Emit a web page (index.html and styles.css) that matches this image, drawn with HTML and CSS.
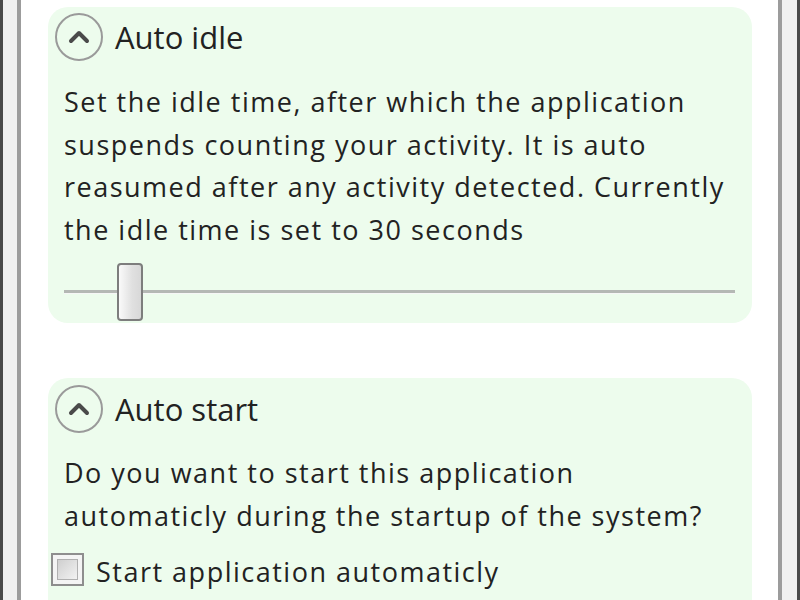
FILE: index.html
```html
<!DOCTYPE html>
<html>
<head>
<meta charset="utf-8">
<link rel="stylesheet" href="styles.css">
</head>
<body>
<div class="frame">
  <div class="edge edge-left"></div>
  <div class="content">
    <section class="panel panel-idle">
      <div class="panel-head">
        <span class="toggle">
          <svg width="48" height="48" viewBox="0 0 48 48"><circle cx="24" cy="24" r="23" fill="none" stroke="#9a9a9a" stroke-width="2"/><path d="M16 28 L24 20 L32 28" fill="none" stroke="#4a4a4a" stroke-width="4" stroke-linecap="round" stroke-linejoin="round"/></svg>
        </span>
        <span class="title">Auto idle</span>
      </div>
      <p class="desc">Set the idle time, after which the application<br>suspends counting your activity. It is auto<br>reasumed after any activity detected. Currently<br>the idle time is set to 30 seconds</p>
      <div class="slider">
        <div class="track"></div>
        <div class="thumb"></div>
      </div>
    </section>
    <section class="panel panel-start">
      <div class="panel-head">
        <span class="toggle">
          <svg width="48" height="48" viewBox="0 0 48 48"><circle cx="24" cy="24" r="23" fill="none" stroke="#9a9a9a" stroke-width="2"/><path d="M16 28 L24 20 L32 28" fill="none" stroke="#4a4a4a" stroke-width="4" stroke-linecap="round" stroke-linejoin="round"/></svg>
        </span>
        <span class="title">Auto start</span>
      </div>
      <p class="desc">Do you want to start this application<br>automaticly during the startup of the system?</p>
      <label class="check">
        <span class="box"><span class="box-inner"></span></span>
        <span class="check-label">Start application automaticly</span>
      </label>
    </section>
  </div>
  <div class="edge edge-right"></div>
</div>
</body>
</html>
```
FILE: styles.css
```css
html, body {
  margin: 0;
  padding: 0;
  background: #ffffff;
  height: 100%;
  overflow: hidden;
}
body {
  font-family: "Open Sans", "Noto Sans", sans-serif;
  color: #222222;
}
.frame {
  display: flex;
  height: 600px;
}
.edge {
  width: 14px;
  background: #f0f0f0;
  flex: none;
}
.edge-left {
  border-left: 3px solid #4a4a4a;
  border-right: 4px solid #9c9c9c;
}
.edge-right {
  width: 15px;
  border-left: 4px solid #9c9c9c;
  border-right: 3px solid #4a4a4a;
}
.content {
  flex: 1;
  padding: 7px 26px 0 27px;
  display: flex;
  flex-direction: column;
  gap: 55px;
  overflow: hidden;
}
.panel {
  background: #edfced;
  border-radius: 20px;
  flex: none;
}
.panel-idle {
  padding: 6px 16px 2px 7px;
}
.panel-start {
  padding: 7px 16px 40px 3px;
}
.panel-head {
  display: flex;
  align-items: center;
  gap: 12px;
  height: 48px;
}
.panel-start .panel-head {
  padding-left: 4px;
}
.toggle {
  width: 48px;
  height: 48px;
  display: block;
}
.toggle svg {
  display: block;
}
.title {
  font-size: 31px;
  line-height: 48px;
}
.desc {
  margin: 20px 0 0 9px;
  font-size: 27px;
  letter-spacing: 1.5px;
  line-height: 42.5px;
}
.panel-start .desc {
  margin: 19px 0 0 13px;
}
.slider {
  position: relative;
  height: 58px;
  margin: 12px 0 0 9px;
  display: flex;
  align-items: center;
}
.track {
  flex: 1;
  height: 3px;
  background: #b4b8b4;
  border-bottom: 1px solid #f6f6f6;
  margin-right: 1px;
}
.thumb {
  position: absolute;
  left: 53px;
  top: 0;
  width: 22px;
  height: 54px;
  border: 2px solid #7d7d7d;
  border-radius: 4px;
  background: linear-gradient(to right, #fafafa, #e0e0e0 60%, #d8d8d8);
}
.check {
  display: flex;
  align-items: center;
  gap: 12px;
  margin-top: 15px;
}
.box {
  width: 29px;
  height: 29px;
  border: 2px solid #8e8e8e;
  background: #f4f4f4;
  display: flex;
  align-items: center;
  justify-content: center;
  flex: none;
}
.box-inner {
  width: 19px;
  height: 19px;
  border: 1px solid #b0b0b0;
  background: linear-gradient(135deg, #cfcfcf, #f2f2f2);
}
.check-label {
  font-size: 27px;
  letter-spacing: 1.5px;
  line-height: 34px;
  position: relative;
  top: 3px;
}
```
